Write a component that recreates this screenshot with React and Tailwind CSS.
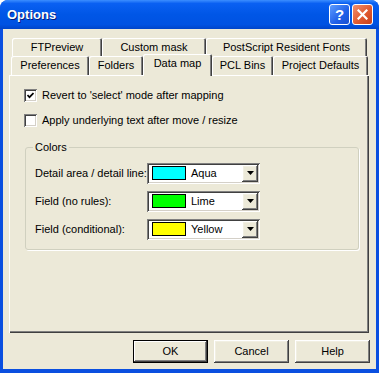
const raised =
  'shadow-[inset_-1px_-1px_0_#404040,inset_1px_1px_0_#ffffff,inset_-2px_-2px_0_#808080,inset_2px_2px_0_#f1efe2]';
const sunken =
  'shadow-[inset_1px_1px_0_#808080,inset_-1px_-1px_0_#ffffff,inset_2px_2px_0_#404040,inset_-2px_-2px_0_#d4d0c8]';
const tabEdge = 'shadow-[inset_1px_1px_0_#ffffff,inset_-1px_0_0_#404040,inset_-2px_0_0_#808080]';

function Tab({ label, w, selected }) {
  return (
    <div
      className={`flex items-center justify-center rounded-t-[2px] bg-[#ECE9D8] ${tabEdge} ${
        selected ? 'h-[22px] pb-[3px]' : 'h-[19px] mb-[1px]'
      }`}
      style={{ width: w }}
    >
      {label}
    </div>
  );
}

function Checkbox({ checked, label }) {
  return (
    <div className="flex items-center h-[13px]">
      <div className={`w-[13px] h-[13px] bg-white flex items-center justify-center ${sunken}`}>
        {checked && (
          <svg width="7" height="7" viewBox="0 0 7 7">
            <polyline points="0.5,3 2.5,5.2 6.5,1" fill="none" stroke="#000" strokeWidth="1.7" />
          </svg>
        )}
      </div>
      <span className="ml-[5px]">{label}</span>
    </div>
  );
}

function ColorCombo({ color, name }) {
  return (
    <div className={`w-[113px] h-[21px] bg-white flex items-center pl-[5px] pr-[2px] ${sunken}`}>
      <div className="w-[34px] h-[14px] border border-black" style={{ background: color }} />
      <span className="ml-[5px] flex-1">{name}</span>
      <div className={`w-[16px] h-[17px] bg-[#ECE9D8] flex items-center justify-center ${raised}`}>
        <svg width="7" height="4" viewBox="0 0 7 4">
          <polygon points="0,0 7,0 3.5,4" fill="#000" />
        </svg>
      </div>
    </div>
  );
}

function Button({ children, isDefault }) {
  return (
    <div
      className={`w-[75px] h-[23px] flex items-center justify-center bg-[#ECE9D8] ${
        isDefault
          ? 'shadow-[inset_0_0_0_1px_#000,inset_-2px_-2px_0_#404040,inset_2px_2px_0_#ffffff,inset_-3px_-3px_0_#808080]'
          : raised
      }`}
    >
      {children}
    </div>
  );
}

export default function App() {
  return (
    <div className="w-[379px] h-[373px] bg-white">
      <div className="w-full h-full flex flex-col rounded-t-[8px] overflow-hidden bg-[#0A4FE0] text-[11px] text-black font-['Liberation_Sans',Arial,sans-serif]">
        {/* Title bar */}
        <div className="h-[29px] flex items-center pl-[7px] pr-[6px] bg-[linear-gradient(to_bottom,#3C8EFF_0%,#0A60F2_12%,#0056E6_50%,#0052E2_85%,#0044C9_100%)]">
          <span className="flex-1 text-white font-bold text-[13px] [text-shadow:1px_1px_0_#0A1E7A]">Options</span>
          <div className="flex gap-[2px]">
            <div className="w-[21px] h-[21px] rounded-[3px] border border-white bg-[linear-gradient(135deg,#5C9CFF,#2060E8_60%,#1A50D0)] flex items-center justify-center text-white font-bold text-[15px] leading-none">
              ?
            </div>
            <div className="w-[21px] h-[21px] rounded-[3px] border border-white bg-[linear-gradient(135deg,#F09070,#E05A30_55%,#C8401A)] flex items-center justify-center">
              <svg width="11" height="11" viewBox="0 0 11 11">
                <path d="M1.5 1.5 L9.5 9.5 M9.5 1.5 L1.5 9.5" stroke="#fff" strokeWidth="2.2" strokeLinecap="square" />
              </svg>
            </div>
          </div>
        </div>

        {/* Body */}
        <div className="flex-1 mx-[3px] mb-[4px] bg-[#ECE9D8] flex flex-col pt-[9px] pl-[6px] pr-[6px]">
          {/* Tab rows */}
          <div className="flex ml-[3px] h-[18px]">
            <Tab label="FTPreview" w={90} />
            <Tab label="Custom mask" w={104} />
            <Tab label="PostScript Resident Fonts" w={161} />
          </div>
          <div className="flex items-end ml-[2px] h-[22px] -mt-[2px] -mb-[1px] relative z-10">
            <Tab label="Preferences" w={78} />
            <Tab label="Folders" w={54} />
            <Tab label="Data map" w={69} selected />
            <Tab label="PCL Bins" w={61} />
            <Tab label="Project Defaults" w={95} />
          </div>

          {/* Panel */}
          <div className="w-[360px] h-[258px] shadow-[inset_1px_1px_0_#ffffff,inset_-1px_-1px_0_#404040,inset_-2px_-2px_0_#808080] pt-[14px] pl-[15px]">
            <div className="flex flex-col gap-[12px]">
              <Checkbox checked label="Revert to 'select' mode after mapping" />
              <Checkbox label="Apply underlying text after move / resize" />
            </div>

            <fieldset className="mt-[12px] ml-[1px] w-[334px] border border-[#D0D0BF] rounded-[3px] shadow-[1px_1px_0_#ffffff] pl-[9px] pt-[7px] pb-[9px]">
              <legend className="ml-[-2px] px-[2px]">Colors</legend>
              <div className="grid grid-cols-[112px_113px] gap-y-[7px] items-center">
                <span>Detail area / detail line:</span>
                <ColorCombo color="#00FFFF" name="Aqua" />
                <span>Field (no rules):</span>
                <ColorCombo color="#00FF00" name="Lime" />
                <span>Field (conditional):</span>
                <ColorCombo color="#FFFF00" name="Yellow" />
              </div>
            </fieldset>
          </div>

          {/* Buttons */}
          <div className="flex justify-end gap-[6px] mt-[7px]">
            <Button isDefault>OK</Button>
            <Button>Cancel</Button>
            <Button>Help</Button>
          </div>
        </div>
      </div>
    </div>
  );
}
